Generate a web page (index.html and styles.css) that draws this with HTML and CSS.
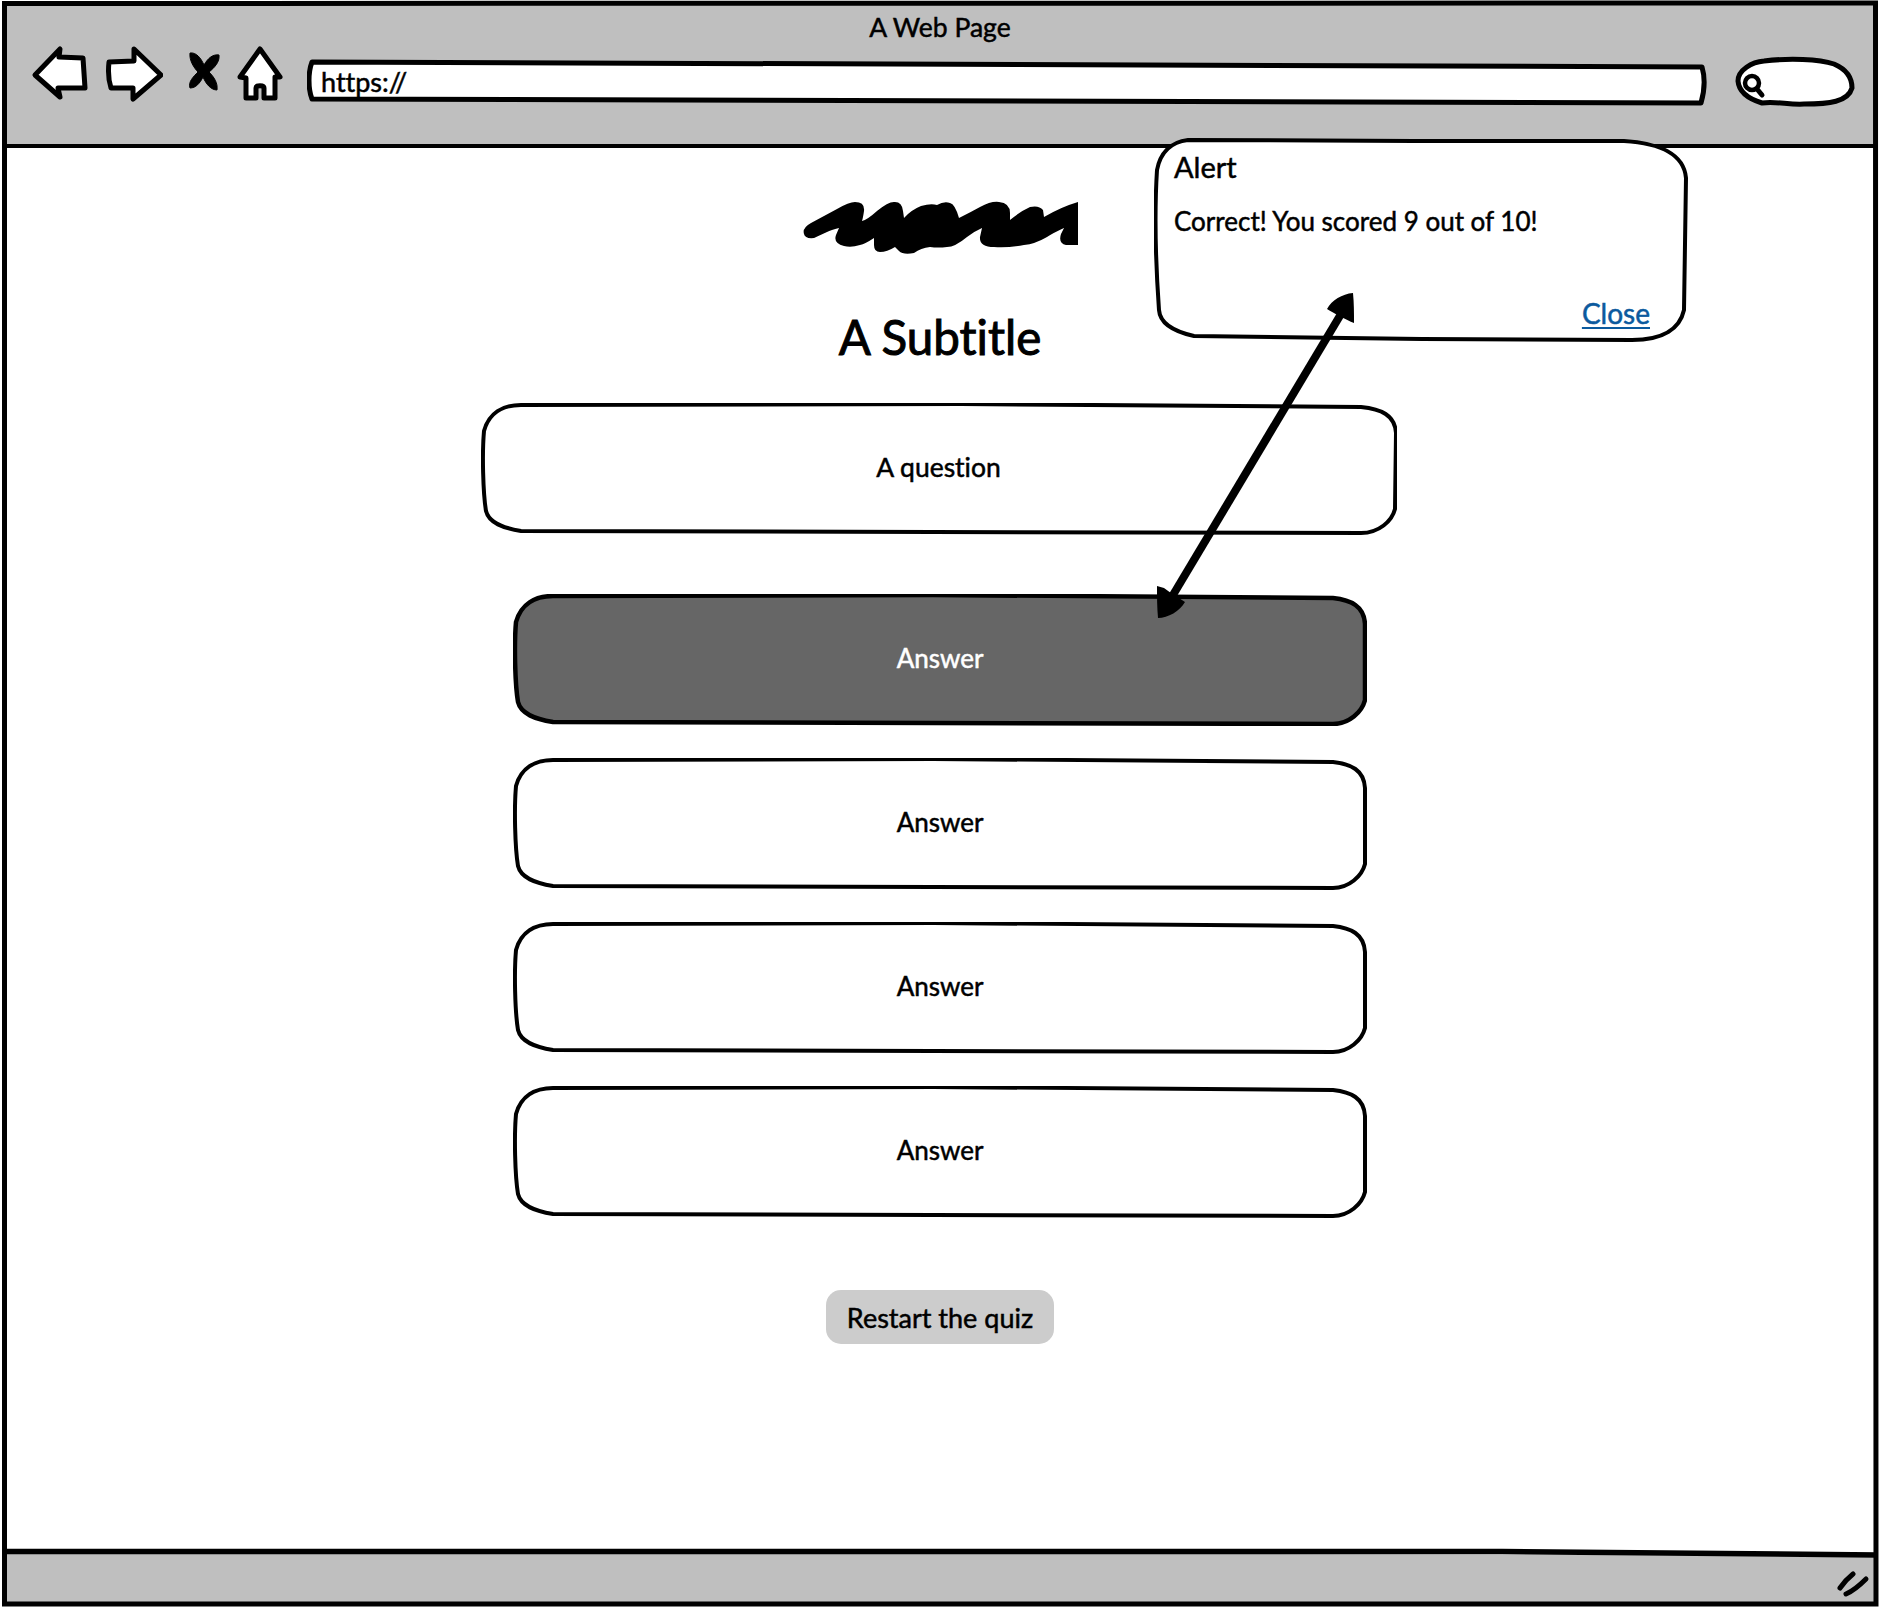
FILE: index.html
```html
<!DOCTYPE html>
<html lang="en">
<head>
<meta charset="utf-8">
<title>A Web Page</title>
<link rel="stylesheet" href="styles.css">
</head>
<body>
<svg class="defs" width="0" height="0" aria-hidden="true">
  <symbol id="answer-shape" viewBox="0 0 854 132">
    <path d="M3 28C8 10 22 2 40 2L420 1L820 4C838 6 851 12 852 30L852 106C849 118 836 130 820 130L40 128C22 125 8 120 5 108C2 90 1 50 3 28Z"/>
  </symbol>
</svg>
<div class="window">
  <header class="chrome">
    <div class="page-title">A Web Page</div>
    <div class="toolbar">
      <svg class="tool tool-back" viewBox="0 0 58 64"><path d="M5 31L30 5L29 13L53 14L55 44L28 44L30 53Z"/></svg>
      <svg class="tool tool-forward" viewBox="0 0 58 64"><path d="M4 18L29 17L29 5L56 31L28 55L28 44L6 44C3 35 3 27 4 18Z"/></svg>
      <svg class="tool tool-stop" viewBox="0 0 34 64"><path d="M3 9C9 8 14 14 17 21C21 14 26 10 32 11C33 18 27 24 22 28C27 33 31 39 30 46C24 46 19 40 16 33C13 39 9 44 3 44C1 38 6 33 11 28C7 24 2 16 3 9Z"/></svg>
      <svg class="tool tool-home" viewBox="0 0 50 64"><path d="M25 5L45 33L40 33L40 54L29 54L29 44C29 41 21 41 21 44L21 54L11 54L11 34L5 33Z"/></svg>
      <div class="url-field">
        <svg class="url-shape" viewBox="0 0 1400 64"><path d="M5 18L1395 23C1398 33 1398 45 1394 59L5 55C1 45 1 28 5 18Z"/></svg>
        <span class="url-text">https://</span>
      </div>
      <svg class="tool tool-search" viewBox="0 0 122 64">
        <path class="search-box" d="M4 37C4 26 18 18 30 17C55 14 85 15 100 20C114 26 118 36 118 44C114 58 95 60 70 60C55 61 42 57 28 59C15 55 5 49 4 37Z"/>
        <circle class="search-lens" cx="18" cy="39" r="7"/>
        <path class="search-handle" d="M23 45L28 51"/>
      </svg>
    </div>
  </header>

  <main class="page">
    <svg class="logo" viewBox="0 0 275 54">
      <path d="M1 33Q-1 27 8 22L34 8Q46 1 52 1Q62 1 61 10Q60 17 59 20Q64 19 74 10Q86 0 92 1Q99 1 100 10L101 17Q108 9 118 5Q128 2 134 4Q141 0 147 2Q152 3 156 17Q168 11 177 6Q188 0 196 1Q207 2 207 12L207 19Q218 10 227 6Q236 4 240 9L241 16Q258 6 275 1L275 44L263 44Q255 42 258 33L261 27Q250 32 244 36Q232 43 221 44Q205 47 191 46Q176 46 177 36L179 27Q170 31 164 36Q152 46 144 46Q135 47 127 46Q118 47 111 52Q100 54 96 50L92 46Q84 51 77 51Q71 51 71 44L71 37Q62 43 57 44Q48 47 41 45Q30 42 33 34L36 27Q28 29 24 31L11 37Q2 38 1 33Z"/>
    </svg>
    <h1 class="subtitle">A Subtitle</h1>

    <section class="box question">
      <svg class="box-shape" viewBox="0 0 916 132"><path d="M3 28C8 10 22 2 40 2L480 1L880 4C900 6 914 12 915 30L914 106C911 118 898 130 880 130L40 128C22 125 8 120 5 108C2 90 1 50 3 28Z"/></svg>
      <span class="box-label">A question</span>
    </section>

    <div class="answers">
      <div class="box answer answer-selected">
        <svg class="box-shape"><use href="#answer-shape"/></svg>
        <span class="box-label">Answer</span>
      </div>
      <div class="box answer">
        <svg class="box-shape"><use href="#answer-shape"/></svg>
        <span class="box-label">Answer</span>
      </div>
      <div class="box answer">
        <svg class="box-shape"><use href="#answer-shape"/></svg>
        <span class="box-label">Answer</span>
      </div>
      <div class="box answer">
        <svg class="box-shape"><use href="#answer-shape"/></svg>
        <span class="box-label">Answer</span>
      </div>
    </div>

    <button class="restart" type="button">Restart the quiz</button>

    <aside class="alert">
      <svg class="alert-shape" viewBox="0 0 536 204"><path d="M3 32C6 16 16 4 34 2L260 3L470 3C505 5 530 16 532 40L530 172C526 190 510 202 478 202L268 201L40 198C22 194 6 186 5 172C2 130 0 80 3 32Z"/></svg>
      <div class="alert-title">Alert</div>
      <p class="alert-text">Correct! You scored 9 out of 10!</p>
      <a class="alert-close" href="#">Close</a>
    </aside>

    <svg class="connector" viewBox="0 0 210 335">
      <path class="connector-line" d="M191 29L20 315"/>
      <path class="connector-head" d="M203 8C192 9 182 15 177 24C184 28 196 35 204 38C204 28 204 18 203 8Z"/>
      <path class="connector-head" d="M8 333C18 333 30 326 35 317C28 312 20 308 14 303L7 301C7 312 7 322 8 333Z"/>
    </svg>
  </main>

  <footer class="status">
    <svg class="status-shape" viewBox="0 0 1876 58" preserveAspectRatio="none"><path class="status-fill" d="M0 2L1876 8L1876 58L0 58Z"/><path class="status-line" d="M0 3.5L1500 3.5L1876 7"/></svg>
    <svg class="resize" viewBox="0 0 34 30"><path d="M3 17C7 11 11 7 16 3"/><path d="M9 23C16 20 23 14 29 8"/></svg>
  </footer>

  <svg class="frame" viewBox="0 0 1880 1608"><path d="M4.5 3.5L1875.5 3L1876 1604L4.5 1604Z"/></svg>
</div>
</body>
</html>
```

FILE: styles.css
```css
* { box-sizing: border-box; }
html, body { margin: 0; padding: 0; background: #fff; }
body { font-family: "Lato", "Liberation Sans", sans-serif; color: #000; -webkit-text-stroke: 0.5px currentColor; font-variant-ligatures: none; }
.defs { position: absolute; }

.window { position: relative; width: 1880px; height: 1608px; padding: 1px 2px 2px; display: flex; flex-direction: column; overflow: hidden; }
.frame { position: absolute; inset: 0; width: 1880px; height: 1608px; pointer-events: none; }
.frame path { fill: none; stroke: #000; stroke-width: 5; }

.chrome { flex: none; height: 147px; background: #bfbfbf; border-bottom: 4px solid #000; }
.page-title { height: 43px; padding-top: 9px; text-align: center; font-size: 26.5px; line-height: 34px; }
.toolbar { display: flex; padding-left: 28px; }
.tool { display: block; height: 64px; flex: none; }
.tool path { fill: #fff; stroke: #000; stroke-width: 5; stroke-linejoin: round; }
.tool-back { width: 58px; }
.tool-forward { width: 58px; margin-left: 17px; }
.tool-stop { width: 34px; margin-left: 24px; }
.tool-stop path { fill: #000; stroke-width: 1; }
.tool-home { width: 50px; margin-left: 14px; }
.url-field { position: relative; width: 1400px; height: 64px; margin-left: 22px; flex: none; }
.url-shape { position: absolute; inset: 0; width: 100%; height: 100%; }
.url-shape path { fill: #fff; stroke: #000; stroke-width: 5; stroke-linejoin: round; }
.url-text { position: relative; display: block; padding: 21px 0 0 14px; font-size: 27px; line-height: 34px; }
.tool-search { width: 122px; margin-left: 27px; }
.tool .search-box { stroke-width: 5; }
.search-lens { fill: #fff; stroke: #000; stroke-width: 4.5; }
.tool .search-handle { fill: none; stroke-width: 5; stroke-linecap: round; }

.page { position: relative; flex: 1; min-height: 0; display: flex; flex-direction: column; align-items: center; }
.logo { display: block; width: 275px; height: 54px; margin-top: 53px; }
.logo path { fill: #000; }
.subtitle { margin: 52px 0 0; height: 60px; font-size: 47.5px; line-height: 60px; font-weight: 400; -webkit-text-stroke: 1px currentColor; }

.box { position: relative; display: flex; align-items: center; justify-content: center; flex: none; padding-bottom: 5px; }
.box-shape { position: absolute; inset: 0; width: 100%; height: 100%; }
.box-shape path, .box-shape use { fill: #fff; stroke: #000; stroke-width: 4; }
.box-label { position: relative; font-size: 26.5px; line-height: 34px; }
.question { width: 916px; height: 132px; margin-top: 36px; margin-left: -3px; }
.answers { display: flex; flex-direction: column; gap: 32px; margin-top: 59px; }
.answer { width: 854px; height: 132px; }
.answer .box-label { font-size: 26px; }
.answer-selected .box-shape use { fill: #666; stroke-width: 4.5; }
.answer-selected .box-label { color: #fff; }

.restart { display: block; width: 228px; height: 54px; margin-top: 72px; padding: 0; border: 0; border-radius: 15px; background: #ccc; color: #000; font: inherit; font-size: 27px; -webkit-text-stroke: 0.5px currentColor; }

.alert { position: absolute; left: 1152px; top: -10px; width: 536px; height: 204px; padding: 11px 40px 0 20px; display: flex; flex-direction: column; }
.alert-shape { position: absolute; inset: 0; width: 100%; height: 100%; }
.alert-shape path { fill: #fff; stroke: #000; stroke-width: 4; }
.alert-title { position: relative; font-size: 29px; line-height: 36px; }
.alert-text { position: relative; margin: 18px 0 0; font-size: 26px; line-height: 36px; }
.alert-close { position: relative; align-self: flex-end; margin-top: 56px; color: #0b5a9e; font-size: 28px; line-height: 36px; text-decoration-thickness: 2px; text-underline-offset: 3px; }

.connector { position: absolute; left: 1148px; top: 137px; width: 210px; height: 335px; }
.connector-line { fill: none; stroke: #000; stroke-width: 8; }
.connector-head { fill: #000; }

.status { position: relative; flex: none; height: 58px; display: flex; justify-content: flex-end; align-items: flex-end; padding: 0 7px 5px 0; }
.status-shape { position: absolute; inset: 0; width: 100%; height: 100%; }
.status-fill { fill: #bfbfbf; }
.status-line { fill: none; stroke: #000; stroke-width: 5.5; }
.resize { position: relative; display: block; width: 34px; height: 30px; }
.resize path { fill: none; stroke: #000; stroke-width: 5; stroke-linecap: round; }
```
